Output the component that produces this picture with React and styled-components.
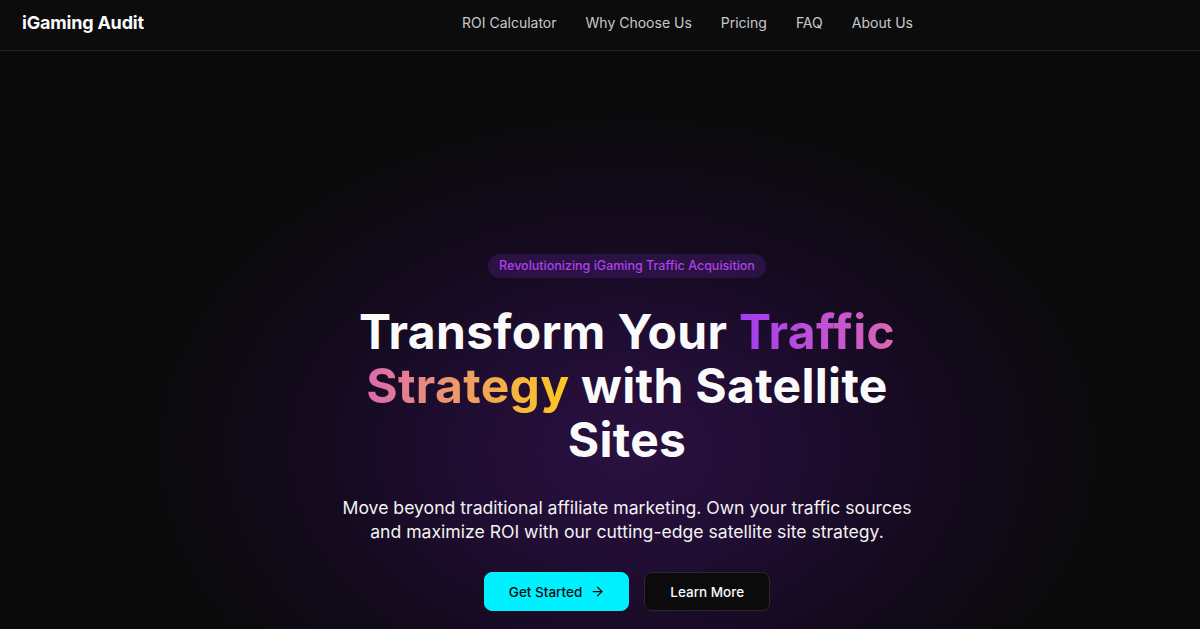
import React from 'react';
import styled, { createGlobalStyle } from 'styled-components';
import { ArrowRight } from 'lucide-react';

const GlobalStyle = createGlobalStyle`
  html, body {
    margin: 0;
    padding: 0;
    background: #0a0a0b;
  }
  body {
    font-family: Inter, "Liberation Sans", sans-serif;
    color: #fff;
    -webkit-font-smoothing: antialiased;
  }
  * { box-sizing: border-box; }
`;

const Page = styled.div`
  height: 629px;
  overflow: hidden;
  display: flex;
  flex-direction: column;
  background: #0a0a0b;
`;

const Header = styled.header`
  height: 51px;
  flex-shrink: 0;
  display: flex;
  align-items: center;
  padding: 0 22px 6px;
  background: #0c0c0d;
  border-bottom: 1px solid #232326;
`;

const Logo = styled.div`
  font-size: 18px;
  font-weight: 700;
  letter-spacing: -0.2px;
  color: #fafafa;
`;

const Nav = styled.nav`
  display: flex;
  gap: 29px;
  margin-left: auto;
  margin-right: 265px;
`;

const NavLink = styled.a`
  color: #c9c9cc;
  font-size: 14px;
  text-decoration: none;
`;

const Hero = styled.main`
  flex: 1;
  display: flex;
  flex-direction: column;
  align-items: center;
  padding: 203px 0 0 54px;
  background: radial-gradient(
    ellipse 480px 340px at 627px 400px,
    #2a1040 0%,
    #200d32 35%,
    #140a1e 65%,
    #0a0a0b 100%
  );
`;

const Badge = styled.span`
  display: inline-block;
  padding: 0 11px;
  height: 24px;
  line-height: 24px;
  border-radius: 12px;
  background: #2a1242;
  color: #b040ec;
  font-size: 12.5px;
  font-weight: 500;
`;

const Title = styled.h1`
  margin: 27px 0 0;
  width: 600px;
  text-align: center;
  font-size: 48px;
  line-height: 54px;
  font-weight: 700;
  letter-spacing: 0.3px;
  color: #fafafa;
`;

const Gradient = styled.span`
  background: linear-gradient(90deg, #a33cf4 0%, #d45fbf 38%, #e88a80 60%, #f4b045 82%, #fdc91c 100%);
  -webkit-background-clip: text;
  background-clip: text;
  color: transparent;
`;

const Lead = styled.p`
  margin: 29px 0 0;
  max-width: 600px;
  text-align: center;
  font-size: 17.6px;
  line-height: 24px;
  color: #f2f2f2;
`;

const Actions = styled.div`
  display: flex;
  gap: 15px;
  margin-top: 28px;
`;

const Button = styled.button`
  height: 39px;
  padding: ${p => (p.$primary ? '0 23px 0 24px' : '0 25px')};
  border-radius: 8px;
  display: inline-flex;
  align-items: center;
  gap: 8px;
  font-family: inherit;
  font-size: 13.5px;
  font-weight: 500;
  cursor: pointer;
  background: ${p => (p.$primary ? '#00f0ff' : '#0b0b0c')};
  color: ${p => (p.$primary ? '#0b0b0c' : '#fafafa')};
  border: 1px solid ${p => (p.$primary ? '#00f0ff' : '#2a2a2d')};
`;

export default function App() {
  return (
    <Page>
      <GlobalStyle />
      <Header>
        <Logo>iGaming Audit</Logo>
        <Nav>
          <NavLink href="#roi">ROI Calculator</NavLink>
          <NavLink href="#why">Why Choose Us</NavLink>
          <NavLink href="#pricing">Pricing</NavLink>
          <NavLink href="#faq">FAQ</NavLink>
          <NavLink href="#about">About Us</NavLink>
        </Nav>
      </Header>
      <Hero>
        <Badge>Revolutionizing iGaming Traffic Acquisition</Badge>
        <Title>
          Transform Your <Gradient>Traffic Strategy</Gradient> with Satellite Sites
        </Title>
        <Lead>
          Move beyond traditional affiliate marketing. Own your traffic sources
          and maximize ROI with our cutting-edge satellite site strategy.
        </Lead>
        <Actions>
          <Button $primary>
            Get Started <ArrowRight size={15} strokeWidth={2} />
          </Button>
          <Button>Learn More</Button>
        </Actions>
      </Hero>
    </Page>
  );
}
